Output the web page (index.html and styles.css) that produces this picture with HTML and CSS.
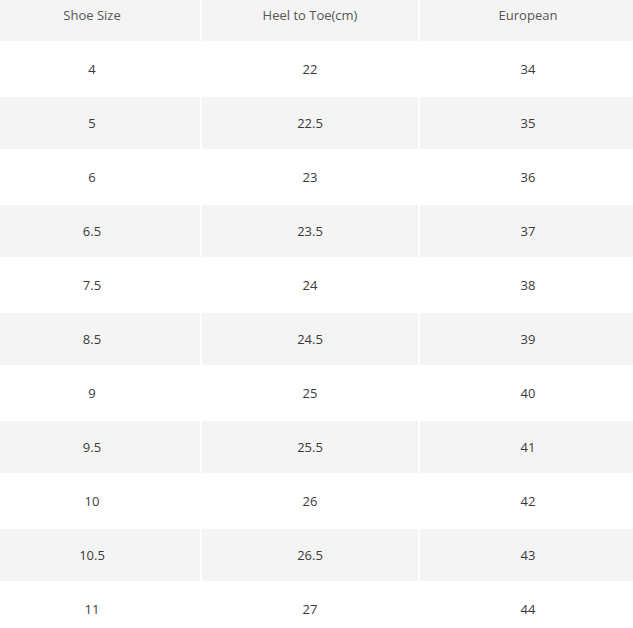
FILE: index.html
```html
<!DOCTYPE html>
<html lang="en">
<head>
<meta charset="utf-8">
<title>Size Chart</title>
<link rel="stylesheet" href="styles.css">
</head>
<body>
<table class="size-table">
  <thead>
    <tr><th>Shoe Size</th><th>Heel to Toe(cm)</th><th>European</th></tr>
  </thead>
  <tbody>
    <tr><td>4</td><td>22</td><td>34</td></tr>
    <tr><td>5</td><td>22.5</td><td>35</td></tr>
    <tr><td>6</td><td>23</td><td>36</td></tr>
    <tr><td>6.5</td><td>23.5</td><td>37</td></tr>
    <tr><td>7.5</td><td>24</td><td>38</td></tr>
    <tr><td>8.5</td><td>24.5</td><td>39</td></tr>
    <tr><td>9</td><td>25</td><td>40</td></tr>
    <tr><td>9.5</td><td>25.5</td><td>41</td></tr>
    <tr><td>10</td><td>26</td><td>42</td></tr>
    <tr><td>10.5</td><td>26.5</td><td>43</td></tr>
    <tr><td>11</td><td>27</td><td>44</td></tr>
  </tbody>
</table>
</body>
</html>
```
FILE: styles.css
```css
html {
  overflow: hidden;
  background: #ffffff;
}
body {
  margin: 0;
  font-family: "Open Sans", "Noto Sans", sans-serif;
  font-size: 13px;
  color: #3a3a3a;
}
.size-table {
  width: 656px;
  margin: -13px 0 0 -18px;
  table-layout: fixed;
  border-collapse: separate;
  border-spacing: 2px;
  background: #ffffff;
}
.size-table th,
.size-table td {
  height: 52px;
  padding: 0;
  text-align: center;
  vertical-align: middle;
  font-weight: 400;
  box-sizing: border-box;
}
.size-table th {
  background: #f4f4f4;
  color: #555555;
}
.size-table tbody tr:nth-child(even) td {
  background: #f4f4f4;
}
```
